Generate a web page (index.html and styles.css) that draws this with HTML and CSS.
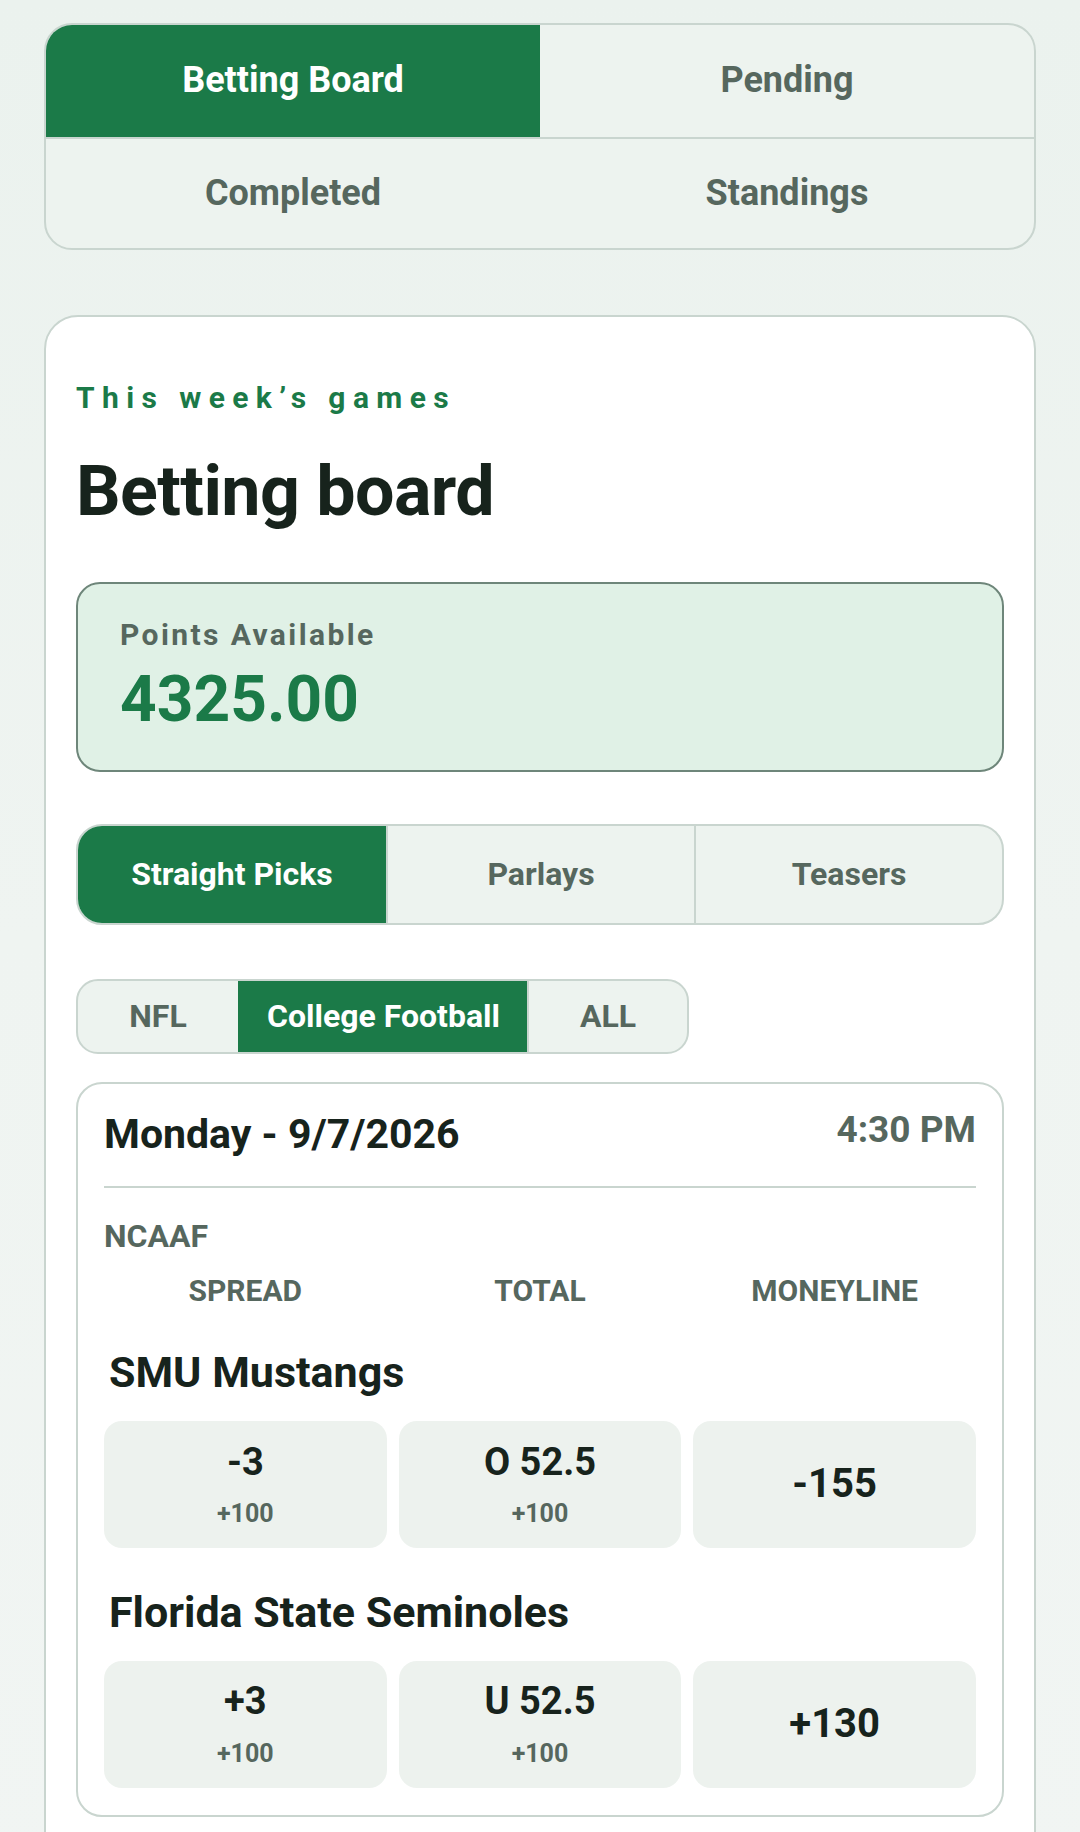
FILE: index.html
```html
<!DOCTYPE html>
<html lang="en">
<head>
<meta charset="utf-8">
<title>Betting board</title>
<link rel="stylesheet" href="styles.css">
</head>
<body>
<div class="page">
  <nav class="tabs">
    <div class="tab active">Betting Board</div>
    <div class="tab">Pending</div>
    <div class="tab">Completed</div>
    <div class="tab">Standings</div>
  </nav>

  <main class="board">
    <p class="eyebrow">This week’s games</p>
    <h1 class="title">Betting board</h1>

    <section class="points">
      <div class="points-label">Points Available</div>
      <div class="points-value">4325.00</div>
    </section>

    <div class="modes">
      <div class="mode active">Straight Picks</div>
      <div class="mode">Parlays</div>
      <div class="mode">Teasers</div>
    </div>

    <div class="sports">
      <div class="sport">NFL</div>
      <div class="sport active">College Football</div>
      <div class="sport">ALL</div>
    </div>

    <article class="game">
      <header class="game-head">
        <div class="game-date">Monday - 9/7/2026</div>
        <div class="game-time">4:30 PM</div>
      </header>
      <div class="league">NCAAF</div>
      <div class="cols">
        <span>SPREAD</span>
        <span>TOTAL</span>
        <span>MONEYLINE</span>
      </div>

      <div class="team">SMU Mustangs</div>
      <div class="odds">
        <div class="odd"><span class="odd-main">-3</span><span class="odd-sub">+100</span></div>
        <div class="odd"><span class="odd-main">O 52.5</span><span class="odd-sub">+100</span></div>
        <div class="odd ml"><span class="odd-main">-155</span></div>
      </div>

      <div class="team">Florida State Seminoles</div>
      <div class="odds">
        <div class="odd"><span class="odd-main">+3</span><span class="odd-sub">+100</span></div>
        <div class="odd"><span class="odd-main">U 52.5</span><span class="odd-sub">+100</span></div>
        <div class="odd ml"><span class="odd-main">+130</span></div>
      </div>
    </article>
  </main>
</div>
</body>
</html>
```

FILE: styles.css
```css
* {
  box-sizing: border-box;
}

html, body {
  margin: 0;
  padding: 0;
}

body {
  font-family: Roboto, "Noto Sans", "Liberation Sans", sans-serif;
  line-height: 1.2;
  color: #17231c;
  background: linear-gradient(180deg, #ebf2ee 0%, #eff4f1 50%, #f1f5f3 100%);
  min-height: 1832px;
}

.page {
  padding: 23px 44px 0;
}

/* top tabs */
.tabs {
  display: grid;
  grid-template-columns: 1fr 1fr;
  border: 2px solid #c9d5cf;
  border-radius: 28px;
  overflow: hidden;
  background: #edf3ef;
}

.tab {
  height: 109px;
  display: flex;
  align-items: center;
  justify-content: center;
  font-size: 36px;
  font-weight: 700;
  color: #56675e;
}

.tab:nth-child(-n+2) {
  height: 114px;
  border-bottom: 2px solid #c9d5cf;
}

.tab.active {
  background: #1b7a48;
  color: #ffffff;
}

/* main card */
.board {
  margin-top: 65px;
  background: #ffffff;
  border: 2px solid #c9d5cf;
  border-radius: 34px;
  padding: 63px 30px 60px;
}

.eyebrow {
  margin: 0;
  font-size: 30px;
  font-weight: 700;
  letter-spacing: 7.4px;
  color: #1b7a48;
}

.title {
  margin: 33px 0 0;
  font-size: 70px;
  font-weight: 700;
  letter-spacing: -0.6px;
  color: #17231c;
}

.points {
  margin-top: 49px;
  background: #e0f1e6;
  border: 2px solid #6e867a;
  border-radius: 24px;
  padding: 33px 42px 31px;
}

.points-label {
  font-size: 30px;
  font-weight: 700;
  letter-spacing: 2.4px;
  color: #56675e;
}

.points-value {
  margin-top: 9px;
  font-size: 64px;
  font-weight: 700;
  color: #1b7a48;
}

/* mode selector */
.modes {
  margin-top: 52px;
  display: grid;
  grid-template-columns: 1fr 1fr 1fr;
  border: 2px solid #c9d5cf;
  border-radius: 26px;
  overflow: hidden;
  background: #edf3ef;
}

.mode {
  height: 97px;
  display: flex;
  align-items: center;
  justify-content: center;
  font-size: 32px;
  font-weight: 700;
  color: #56675e;
}

.mode + .mode {
  border-left: 2px solid #c9d5cf;
}

.mode.active {
  background: #1b7a48;
  color: #ffffff;
}

/* sport filter */
.sports {
  margin-top: 54px;
  display: inline-flex;
  border: 2px solid #c9d5cf;
  border-radius: 22px;
  overflow: hidden;
  background: #edf3ef;
}

.sport {
  height: 71px;
  min-width: 160px;
  padding: 0 27px;
  display: flex;
  align-items: center;
  justify-content: center;
  font-size: 32px;
  font-weight: 700;
  color: #56675e;
}

.sport + .sport {
  border-left: 2px solid #c9d5cf;
}

.sport.active {
  background: #1b7a48;
  color: #ffffff;
  border-color: #1b7a48;
}

/* game card */
.game {
  margin-top: 28px;
  border: 2px solid #c9d5cf;
  border-radius: 26px;
  padding: 26px 26px 27px;
}

.game-head {
  display: flex;
  justify-content: space-between;
  align-items: flex-start;
  padding-bottom: 27px;
  border-bottom: 2px solid #c9d5cf;
}

.game-date {
  font-size: 41px;
  font-weight: 700;
  color: #17231c;
}

.game-time {
  margin-top: -2px;
  font-size: 37px;
  font-weight: 700;
  color: #56675e;
}

.league {
  margin-top: 29px;
  font-size: 32px;
  font-weight: 700;
  color: #56675e;
}

.cols {
  margin-top: 18px;
  display: grid;
  grid-template-columns: 1fr 1fr 1fr;
  gap: 12px;
  text-align: center;
  font-size: 30px;
  font-weight: 700;
  color: #56675e;
}

.team {
  margin-top: 38px;
  padding-left: 5px;
  font-size: 43px;
  font-weight: 700;
  color: #17231c;
}

.odds {
  margin-top: 22px;
  display: grid;
  grid-template-columns: 1fr 1fr 1fr;
  gap: 12px;
}

.odds + .team {
  margin-top: 39px;
}

.odd {
  height: 127px;
  background: #edf2ee;
  border-radius: 18px;
  display: flex;
  flex-direction: column;
  align-items: center;
  justify-content: center;
  gap: 14px;
}

.odd-main {
  font-size: 38px;
  font-weight: 700;
  color: #17231c;
}

.odd-sub {
  font-size: 25px;
  font-weight: 700;
  color: #56675e;
}

.odd.ml .odd-main {
  font-size: 40px;
}
```
